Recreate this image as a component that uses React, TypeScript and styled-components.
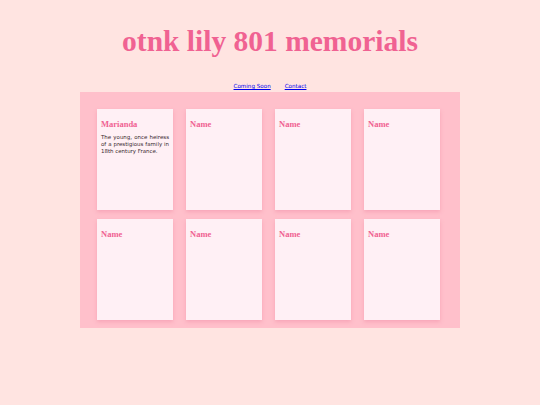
import React from "react";
import styled, { createGlobalStyle } from "styled-components";

const Global = createGlobalStyle`
  html, body { margin: 0; padding: 0; background: #ffe4e1; }
  body { font-family: "DejaVu Sans", Verdana, sans-serif; }
`;

const Page = styled.div`
  display: flex;
  flex-direction: column;
  align-items: center;
  padding-top: 23px;
`;

const Title = styled.h1`
  margin: 0;
  font-family: "Liberation Serif", "Times New Roman", serif;
  font-weight: bold;
  font-size: 29.5px;
  line-height: 36px;
  color: #f06292;
`;

const Nav = styled.nav`
  display: flex;
  gap: 14px;
  margin-top: 23px;
  font-size: 5.6px;
  line-height: 8px;
`;

const NavLink = styled.a`
  color: #0000ee;
  text-decoration: underline;
`;

const Board = styled.main`
  margin-top: 2px;
  width: 380px;
  box-sizing: border-box;
  background: #ffc0cb;
  padding: 17px 20px 8px 17px;
  display: grid;
  grid-template-columns: repeat(4, 76px);
  grid-auto-rows: 101px;
  column-gap: 13px;
  row-gap: 9px;
`;

const Card = styled.section`
  background: #fff0f5;
  box-shadow: 0 2px 4px rgba(240, 130, 160, 0.45);
  padding: 10px 4px 4px 4px;
  box-sizing: border-box;
`;

const CardName = styled.h2`
  margin: 0;
  font-family: "Liberation Serif", "Times New Roman", serif;
  font-weight: bold;
  font-size: 8.5px;
  line-height: 10px;
  color: #f06292;
`;

const CardText = styled.p`
  margin: 5px 0 0;
  font-size: 5.45px;
  line-height: 6.8px;
  color: #3a2a2e;
  text-align: justify;
`;

const cards = [
  { name: "Marianda", text: "The young, once heiress of a prestigious family in 18th century France." },
  { name: "Name" },
  { name: "Name" },
  { name: "Name" },
  { name: "Name" },
  { name: "Name" },
  { name: "Name" },
  { name: "Name" },
];

export default function App() {
  return (
    <>
      <Global />
      <Page>
        <Title>otnk lily 801 memorials</Title>
        <Nav>
          <NavLink href="#">Coming Soon</NavLink>
          <NavLink href="#">Contact</NavLink>
        </Nav>
        <Board>
          {cards.map((c, i) => (
            <Card key={i}>
              <CardName>{c.name}</CardName>
              {c.text && <CardText>{c.text}</CardText>}
            </Card>
          ))}
        </Board>
      </Page>
    </>
  );
}
